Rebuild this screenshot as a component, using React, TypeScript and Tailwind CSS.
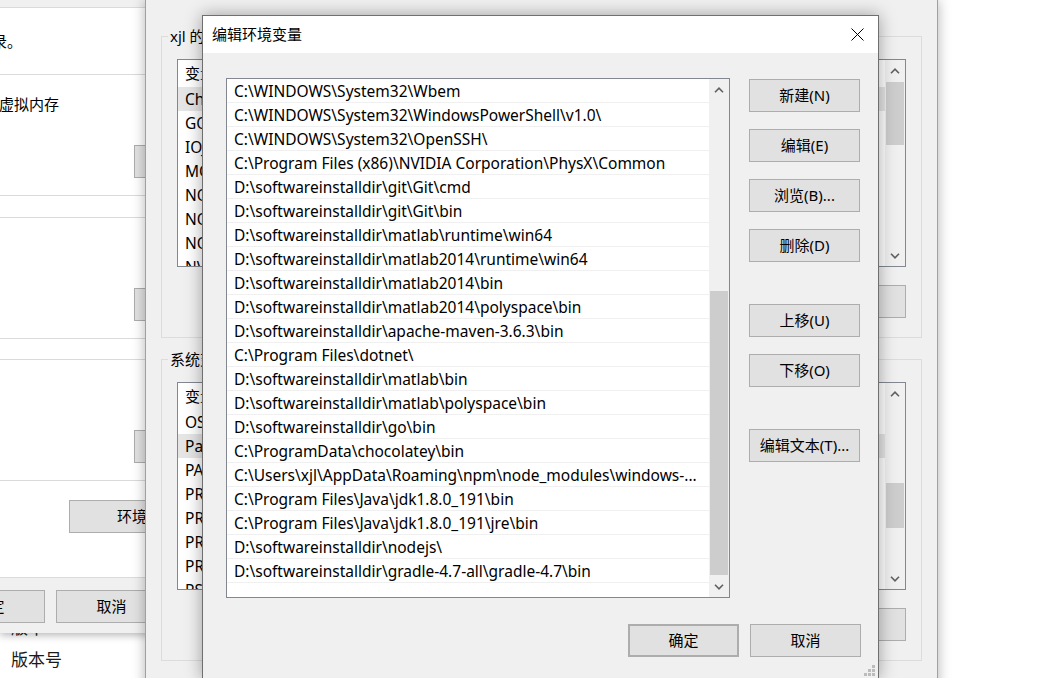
import React from 'react'

const paths = [
  'C:\\WINDOWS\\System32\\Wbem',
  'C:\\WINDOWS\\System32\\WindowsPowerShell\\v1.0\\',
  'C:\\WINDOWS\\System32\\OpenSSH\\',
  'C:\\Program Files (x86)\\NVIDIA Corporation\\PhysX\\Common',
  'D:\\softwareinstalldir\\git\\Git\\cmd',
  'D:\\softwareinstalldir\\git\\Git\\bin',
  'D:\\softwareinstalldir\\matlab\\runtime\\win64',
  'D:\\softwareinstalldir\\matlab2014\\runtime\\win64',
  'D:\\softwareinstalldir\\matlab2014\\bin',
  'D:\\softwareinstalldir\\matlab2014\\polyspace\\bin',
  'D:\\softwareinstalldir\\apache-maven-3.6.3\\bin',
  'C:\\Program Files\\dotnet\\',
  'D:\\softwareinstalldir\\matlab\\bin',
  'D:\\softwareinstalldir\\matlab\\polyspace\\bin',
  'D:\\softwareinstalldir\\go\\bin',
  'C:\\ProgramData\\chocolatey\\bin',
  'C:\\Users\\xjl\\AppData\\Roaming\\npm\\node_modules\\windows-...',
  'C:\\Program Files\\Java\\jdk1.8.0_191\\bin',
  'C:\\Program Files\\Java\\jdk1.8.0_191\\jre\\bin',
  'D:\\softwareinstalldir\\nodejs\\',
  'D:\\softwareinstalldir\\gradle-4.7-all\\gradle-4.7\\bin',
]

const userVars = ['ChocolateyLastPathUpdate', 'GOPATH', 'IOJS_HOME', 'MOZ_PLUGIN_PATH', 'NODE_HOME', 'NODE_PATH', 'NODE_ENV', 'NVM_HOME']
const sysVars = ['OS', 'Path', 'PATHEXT', 'PROCESSOR_ARCHITECTURE', 'PROCESSOR_IDENTIFIER', 'PROCESSOR_LEVEL', 'PROCESSOR_REVISION', 'PSModulePath']

function Chevron({ up }: { up?: boolean }) {
  return (
    <svg width="10" height="6" viewBox="0 0 10 6">
      <path d={up ? 'M1 5.2 L5 1.2 L9 5.2' : 'M1 0.8 L5 4.8 L9 0.8'} fill="none" stroke="#606060" strokeWidth="1.6" />
    </svg>
  )
}

function Scrollbar({ before, thumb }: { before: number; thumb: number }) {
  return (
    <div className="flex w-[20px] flex-col bg-[#f0f0f0]">
      <div className="flex h-[21px] items-center justify-center"><Chevron up /></div>
      <div style={{ height: before }} />
      <div className="mx-[1px] bg-[#cdcdcd]" style={{ height: thumb }} />
      <div className="flex-1" />
      <div className="flex h-[21px] items-center justify-center"><Chevron /></div>
    </div>
  )
}

function Btn({ children, className = '' }: { children: React.ReactNode; className?: string }) {
  return (
    <div className={`flex h-[33px] w-[111px] shrink-0 items-center justify-center border border-[#adadad] bg-[#e1e1e1] text-[15px] text-black ${className}`}>
      {children}
    </div>
  )
}

function VarList({ title, names, selected, thumbTop, thumb }: { title: string; names: string[]; selected: number; thumbTop: number; thumb: number }) {
  return (
    <div className="relative h-[302px] border border-[#dcdcdc] pl-[15px] pt-[22px]">
      <span className="absolute left-[6px] top-[-11px] bg-[#f0f0f0] px-[2px] text-[15px] leading-[20px]">{title}</span>
      <div className="flex h-[208px] w-[729px] border border-[#828790] bg-white">
        <div className="flex-1 overflow-hidden">
          <div className="flex h-[27px] items-center pl-[7px] text-[15px]">变量</div>
          {names.map((n, i) => (
            <div key={n} className={`h-[24px] whitespace-nowrap pl-[7px] text-[15.5px] leading-[25px] ${i === selected ? 'bg-[#e5e5e5]' : ''}`}>{n}</div>
          ))}
        </div>
        <Scrollbar before={thumbTop} thumb={thumb} />
      </div>
      <div className="mt-[18px] flex w-[729px] justify-end">
        <Btn>删除(L)</Btn>
      </div>
    </div>
  )
}

export default function App() {
  return (
    <div className="relative h-[678px] w-[1051px] overflow-hidden bg-white font-['Noto_Sans','Noto_Sans_CJK_SC',sans-serif] text-black">
      {/* page behind */}
      <div className="absolute left-[11px] top-[612px] text-[17px] leading-[32px] text-[#1a1a1a]">
        <div>版本</div>
        <div>版本号</div>
      </div>

      {/* system properties window */}
      <div className="absolute left-0 top-0 flex h-[633px] w-[170px] flex-col bg-white shadow-[0_2px_8px_rgba(0,0,0,0.3)]">
        <div className="h-[8px] border-b border-[#dadada] bg-[#f0f0f0]" />
        <div className="flex h-[67px] items-center border-b border-[#dadada] text-[15px]">
          <span className="ml-[-8px] whitespace-nowrap">录。</span>
        </div>
        <div className="h-[121px] border-b border-[#dadada] pt-[19px]">
          <div className="ml-[-1px] whitespace-nowrap text-[15px] leading-[20px]">虚拟内存</div>
          <Btn className="ml-[134px] mt-[31px]">设置(S)...</Btn>
        </div>
        <div className="h-[22px] border-b border-[#dadada]" />
        <div className="h-[121px] border-b border-[#dadada] pt-[70px]">
          <Btn className="ml-[134px]">设置(E)...</Btn>
        </div>
        <div className="h-[21px] border-b border-[#dadada]" />
        <div className="h-[121px] border-b border-[#dadada] pt-[70px]">
          <Btn className="ml-[134px]">设置(T)...</Btn>
        </div>
        <div className="h-[97px] border-b border-[#dadada] pt-[19px]">
          <Btn className="ml-[69px] w-[150px] justify-start pl-[47px]">环境变量(N)...</Btn>
        </div>
        <div className="flex flex-1 gap-[11px] bg-[#f0f0f0] pt-[12px]">
          <Btn className="ml-[-66px] w-[110px]">确定</Btn>
          <Btn className="w-[110px]">取消</Btn>
        </div>
      </div>

      {/* environment variables window */}
      <div className="absolute left-[145px] top-0 h-[700px] w-[793px] border-x border-[#a0a0a0] bg-[#f0f0f0] px-[15px] pt-[36px] shadow-[0_0_12px_rgba(0,0,0,0.3)]">
        <VarList title="xjl 的用户变量(U)" names={userVars} selected={0} thumbTop={1} thumb={63} />
        <div className="h-[21px]" />
        <VarList title="系统变量(S)" names={sysVars} selected={1} thumbTop={79} thumb={45} />
      </div>

      {/* edit dialog */}
      <div className="absolute left-[202px] top-[15px] flex h-[664px] w-[677px] flex-col border border-[#6f6f6f] bg-[#f0f0f0] shadow-[0_0_16px_rgba(0,0,0,0.35)]">
        <div className="flex h-[37px] shrink-0 items-center justify-between bg-white pl-[9px] pr-[14px]">
          <span className="text-[15px]">编辑环境变量</span>
          <svg width="13" height="13" viewBox="0 0 13 13">
            <path d="M0.5 0.5 L12.5 12.5 M12.5 0.5 L0.5 12.5" stroke="#000" strokeWidth="1" />
          </svg>
        </div>
        <div className="flex">
          <div className="ml-[23px] mt-[25px] flex h-[520px] w-[504px] border border-[#828790] bg-white">
            <div className="flex-1 overflow-hidden">
              {paths.map((p) => (
                <div key={p} className="h-[24px] overflow-hidden whitespace-nowrap border-b border-[#f0f0f0] pl-[7px] text-[15.5px] leading-[24px]">{p}</div>
              ))}
            </div>
            <Scrollbar before={191} thumb={284} />
          </div>
          <div className="ml-[19px] mt-[26px] flex flex-col">
            <Btn>新建(N)</Btn>
            <Btn className="mt-[17px]">编辑(E)</Btn>
            <Btn className="mt-[17px]">浏览(B)...</Btn>
            <Btn className="mt-[17px]">删除(D)</Btn>
            <Btn className="mt-[42px]">上移(U)</Btn>
            <Btn className="mt-[17px]">下移(O)</Btn>
            <Btn className="mt-[42px]">编辑文本(T)...</Btn>
          </div>
        </div>
        <div className="mt-[26px] flex justify-end gap-[11px] pr-[17px]">
          <Btn className="border-2 border-[#0078d7]">确定</Btn>
          <Btn>取消</Btn>
        </div>
        <svg className="absolute bottom-[1px] right-[2px]" width="12" height="12" viewBox="0 0 12 12" fill="#bcbcbc">
          <rect x="8" y="0" width="3" height="3" />
          <rect x="4" y="4" width="3" height="3" />
          <rect x="8" y="4" width="3" height="3" />
          <rect x="0" y="8" width="3" height="3" />
          <rect x="4" y="8" width="3" height="3" />
          <rect x="8" y="8" width="3" height="3" />
        </svg>
      </div>
    </div>
  )
}
